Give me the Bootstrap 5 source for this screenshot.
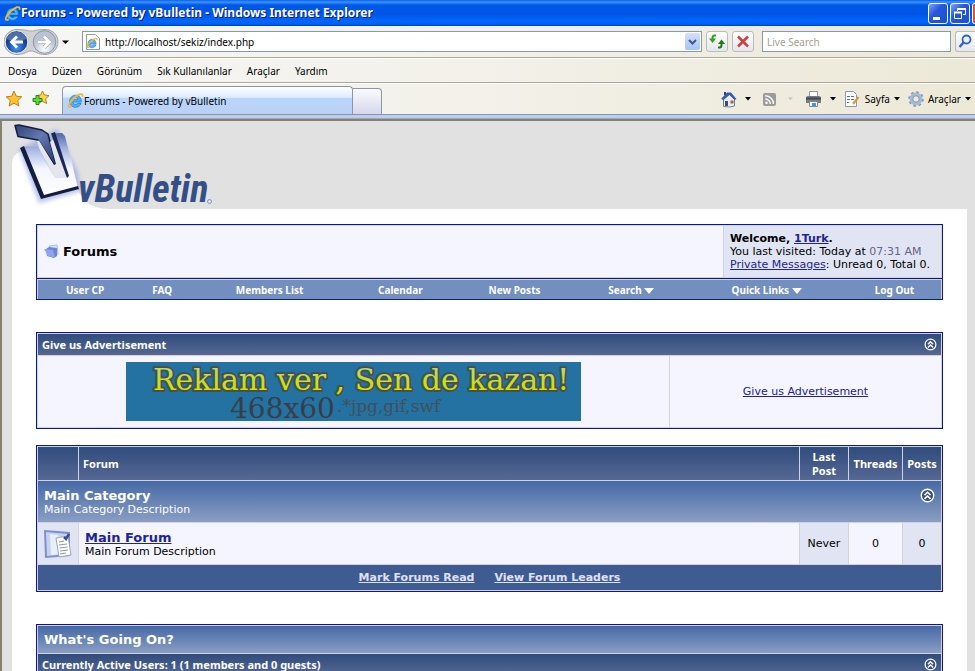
<!DOCTYPE html>
<html lang="tr">
<head>
<meta charset="utf-8">
<meta name="viewport" content="width=device-width, initial-scale=1">
<title>Forums - Powered by vBulletin</title>
<link rel="stylesheet" href="https://cdn.jsdelivr.net/npm/bootstrap@5.3.0/dist/css/bootstrap.min.css">
<style>
body{height:100vh;overflow:hidden;font:11px/13px "DejaVu Sans",sans-serif;color:#000;background:#e1e1e2}
svg{display:block;flex:none}
a{color:#22229c}
.tahoma,.tahoma input,.tahoma button{font-family:"Noto Sans",sans-serif;font-size:10px;line-height:14px}
/* window frame */
.titlebar{height:26px;background:linear-gradient(#0a5ef0 0,#3b94ff 2px,#0058e6 5px,#0055e5 14px,#0068ff 21px,#0060f5 24px,#003dd0 26px);color:#fff;font:bold 12px/16px "Noto Sans",sans-serif;text-shadow:1px 1px 0 #0a1883}
.winbtns{gap:2px}
.winbtn{width:20px;height:21px;border:1px solid #fff;border-radius:3px;background:linear-gradient(135deg,#7fa5f5,#2458dd 40%,#1a4fd5);padding:0}
.chrome{background:linear-gradient(90deg,#f6f6f6,#f3f1ea 45%,#ece9d8)}
.addressbar{height:32px;border-bottom:1px solid #aca899}
.menubar{height:25px;border-top:1px solid #fff;border-bottom:1px solid #aca899;gap:15px}
.menubar a{color:#000;text-decoration:none}
.tabbar{height:32px;border-top:1px solid #fff;border-bottom:1px solid #8c96a5}
.tabband{height:4px;background:#bccdf3;border-bottom:1px solid #9aa8c4}
.field{height:21px;border:1px solid #7f9db9;background:#fff}
.field input{border:0;outline:0;background:transparent;min-width:0;padding:0}
.addressfield{padding:0 1px 0 2px}
.searchfield{width:189px}
.searchfield input::placeholder{color:#a5a290;opacity:1}
.squarebtn{width:22px;height:21px;border:1px solid #b9bcc4;border-radius:3px;background:linear-gradient(#fdfdfd,#e6e7ec);padding:0}
.searchbtn{width:20px;border-right:0;border-radius:3px 0 0 3px}
.dropbtn{width:15px;height:17px;border:0;border-radius:2px;padding:0;background:linear-gradient(#d5e0fc,#a9c3f5)}
.tabs{margin-left:10px}
.tab{width:291px;height:28px;border:1px solid #8c96a5;border-bottom:0;border-radius:4px 4px 0 0;background:linear-gradient(#fff,#dcebfd 38%,#b9d5fb 42%,#bcd0f5)}
.newtab{width:29px;height:26px;border:1px solid #8c96a5;border-left:0;border-bottom:0;border-radius:0 4px 0 0;background:linear-gradient(#fafaff,#d5d8ec)}
.tools{gap:12px}
.toolbtn{border:0;background:transparent;padding:0;color:#000}
.feedbtn{gap:12px}
/* page */
.viewport{border-left:2px solid #85816f;border-top:2px solid #85816f;background:#e1e1e2}
.logo{height:88px;padding-left:10px}
.sheet{background:#fff;margin:0 8px 0 10px;padding:15px 24px 0}
.tborder{width:100%;border:1px solid #0b198c;background:#d1d1e1;border-collapse:separate;border-spacing:1px;color:#000}
.alt1{background:#f5f5ff}
.alt2{background:#e1e4f2}
.padcell{padding:0 6px}
.welcome{width:217px;padding:6px}
.time{color:#666686}
.crumb{font-size:13px;line-height:15px;font-weight:bold}
.navrow{border:1px solid #0b198c;border-top:0;background:#738fbf;box-shadow:inset 0 1px #d1d1e1,inset 1px 0 #d1d1e1,inset -1px 0 #d1d1e1;height:21px;padding-top:2px}
.navrow a{flex-basis:0;color:#fff;text-decoration:none;font:bold 10px/14px "Noto Sans",sans-serif}
.w1{flex-grow:96}.w2{flex-grow:58}.w3{flex-grow:156}.w4{flex-grow:105}.w5{flex-grow:123}.w6{flex-grow:110}.w7{flex-grow:160}.w8{flex-grow:95}
.thead-bar{background:linear-gradient(#2f4b7d,#566893);color:#fff;font:bold 11px/14px "Noto Sans",sans-serif}
.tcat-bar{background:linear-gradient(#4669a6,#8a9ec3);color:#fff}
.tcat-bar strong{font-size:13px;line-height:15px}
.tfoot-bar{background:#3e5c92}
.tfoot-bar a{color:#e0e0f6;font-weight:bold}
.footlinks{gap:20px}
.barrow{height:21px}
.headrow{height:33px}
.adrow{height:71px}
.forumrow{height:41px}
.footrow{height:25px}
.statusrow{height:27px}
.adcell{width:271px}
.iconcell{width:40px}
.c48{width:48px}.c53{width:53px}.c38{width:38px}
.gap1{margin-top:32px}.gap2{margin-top:16px}
.foldbtn{border:0;padding:0;background:transparent}
</style>
<script src="https://cdn.jsdelivr.net/npm/bootstrap@5.3.0/dist/js/bootstrap.bundle.min.js"></script>
</head>
<body>
<svg width="0" height="0" class="position-absolute" aria-hidden="true">
<defs>
<linearGradient id="lime" x1="0" y1="0" x2="0" y2="1"><stop offset=".2" stop-color="#b5dc6c"/><stop offset=".75" stop-color="#d3e000"/></linearGradient>
<linearGradient id="steel" x1="0" y1="0" x2="1" y2="1"><stop offset="0" stop-color="#2f4174"/><stop offset=".45" stop-color="#6478b2"/><stop offset="1" stop-color="#253564"/></linearGradient>
<linearGradient id="silver" x1="0" y1="0" x2="0" y2="1"><stop offset="0" stop-color="#4d64a8"/><stop offset=".25" stop-color="#a5b6e2"/><stop offset=".55" stop-color="#f4f6ff"/><stop offset="1" stop-color="#fff"/></linearGradient>
<radialGradient id="orb" cx=".5" cy=".75"><stop offset="0" stop-color="#4f9bea"/><stop offset=".6" stop-color="#2159b8"/><stop offset="1" stop-color="#163f8c"/></radialGradient>
<radialGradient id="orb2" cx=".5" cy=".8"><stop offset="0" stop-color="#fff"/><stop offset="1" stop-color="#b8c2d2"/></radialGradient>
<filter id="soft" x="-20%" y="-20%" width="140%" height="140%"><feGaussianBlur stdDeviation="2"/></filter>
<symbol id="ie" viewBox="0 0 16 16"><path d="M13.500 9.500H5.500c.3 1.500 1.300 2.200 2.600 2.200 1 0 1.700-.4 2.200-1h3c-.8 2.200-2.700 3.700-5.200 3.700-3.300 0-5.600-2.400-5.600-5.700 0-3.300 2.400-5.700 5.600-5.700 3.400 0 5.600 2.500 5.400 6.500zM5.600 7.200h4.800C10.200 6 9.300 5.300 8 5.300S5.900 6 5.600 7.200z" fill="#4db2fa" stroke="#1b6cc4" stroke-width=".6"/><path d="M14.400 4.500c.7-2-.2-3-2.100-2.400C8.800 3.200 3.500 8 1.900 11.600c-1 2.300.2 3.100 2.500 1.900" fill="none" stroke="#f6b829" stroke-width="1.700"/></symbol>
<symbol id="fold" viewBox="0 0 14 14"><circle cx="7" cy="7" r="5.800" fill="#35507f" stroke="#fff" stroke-width="1.300"/><path d="M4.200 6.700 7 4l2.800 2.700M4.200 10.200 7 7.500l2.800 2.700" fill="none" stroke="#fff" stroke-width="1.500"/></symbol>
<symbol id="down" viewBox="0 0 6 4"><path d="M0 0h6L3 3.500z"/></symbol>
</defs>
</svg>

<div class="d-flex flex-column h-100">
<header class="flex-shrink-0">
<div class="titlebar d-flex align-items-center ps-1">
<svg width="17" height="17"><use href="#ie"/></svg><span class="flex-grow-1 text-nowrap">Forums - Powered by vBulletin - Windows Internet Explorer</span>
<div class="winbtns d-flex flex-shrink-0">
<button class="winbtn" aria-label="Minimize"><svg width="18" height="19"><path d="M4 13h7v3H4z" fill="#fff"/></svg></button>
<button class="winbtn" aria-label="Restore"><svg width="18" height="19"><path d="M6.500 7V4.500h8v6H12M3.500 8.500h7v6h-7z" fill="none" stroke="#fff"/><path d="M6 4h9v2H6zM3 7.500h8v2H3z" fill="#fff"/></svg></button>
<svg width="3" height="21"><rect x=".5" y=".5" width="8" height="20" rx="2" fill="#e1542b" stroke="#fff"/></svg>
</div>
</div>

<div class="chrome tahoma">
<div class="addressbar d-flex align-items-center ps-1">
<svg class="me-2" width="66" height="28" viewBox="0 0 66 28"><path d="M13 1.500C22 1.500 23 3 27 3s6-1.500 14-1.500c8 0 13 5.500 13 12.500s-6 12.500-13 12.500S31 23 27 23s-6 3.500-14 3.500C6 26.500 0 21 0 14S6 1.500 13 1.500z" fill="#cfd1d5" stroke="#a3a6ab"/><circle cx="12.500" cy="14" r="11.300" fill="url(#orb)" stroke="#e7edf5"/><path d="M2.500 11a10.500 10.500 0 0 1 20 0q-10 4-20 0z" fill="#fff" opacity=".25"/><path d="M13 8.500 7.500 14l5.500 5.500M8 14h11" fill="none" stroke="#fff" stroke-width="2.800"/><circle cx="40.500" cy="14" r="11.300" fill="url(#orb2)" stroke="#8f97a3"/><path d="M40 8.500l5.500 5.500-5.500 5.500M45 14H34" fill="none" stroke="#a3acb9" stroke-width="4"/><path d="M40 8.500l5.500 5.500-5.500 5.500M45 14H34" fill="none" stroke="#fff" stroke-width="2.600"/><path d="M58 12.500h7L61.500 16z"/></svg>
<div class="field addressfield d-flex align-items-center flex-grow-1 ms-1"><svg width="16" height="16"><path d="M1.500.5h9l4 4v11h-13z" fill="#fff" stroke="#9a9a9a"/><use href="#ie" x="1" y="3" width="12" height="12"/></svg><input class="flex-grow-1 ms-1" aria-label="Address" value="http://localhost/sekiz/index.php">
<button class="dropbtn d-flex align-items-center justify-content-center" aria-label="Show addresses"><svg width="9" height="6"><path d="M1 1l3.500 3.500L8 1" fill="none" stroke="#3f5a8c" stroke-width="2"/></svg></button></div>
<button class="squarebtn ms-1" aria-label="Refresh"><svg width="20" height="19"><path d="M9 3.500H7.500q-2 0-2 2.500V8" fill="none" stroke="#34a021" stroke-width="2"/><path d="M2 6.500h7L5.500 11z" fill="#34a021"/><path d="M11 15.500h1.500q2 0 2-2.500v-2" fill="none" stroke="#1f7a14" stroke-width="2"/><path d="M11 12h7l-3.500-4.500z" fill="#1f7a14"/></svg></button>
<button class="squarebtn ms-1 me-2" aria-label="Stop"><svg width="20" height="19"><path d="M5 4.500l10 10M15 4.500l-10 10" stroke="#cf3f3f" stroke-width="2.500"/></svg></button>
<div class="field searchfield d-flex align-items-center"><input class="w-100 ps-1" placeholder="Live Search" aria-label="Live Search"></div>
<button class="squarebtn searchbtn ms-1" aria-label="Search"><svg width="19" height="19"><circle cx="10.500" cy="7.500" r="4" fill="#e8f1ff" stroke="#2d62cf" stroke-width="1.800"/><path d="M7.500 10.500 3.500 15" stroke="#2d62cf" stroke-width="2.500"/></svg></button>
</div>

<nav class="menubar d-flex align-items-center ps-2" aria-label="Menu">
<a href="#">Dosya</a><a href="#">Düzen</a><a href="#">Görünüm</a><a href="#">Sık Kullanılanlar</a><a href="#">Araçlar</a><a href="#">Yardım</a>
</nav>

<div class="tabbar d-flex align-items-center">
<button class="toolbtn ms-1" aria-label="Favorites"><svg width="20" height="18"><path d="M10 1l2.300 5.200 5.500.6-4.100 3.700 1.200 5.500L10 13.200 5.100 16l1.200-5.500L2.200 6.800l5.500-.6z" fill="#ffc531" stroke="#b8801f"/></svg></button>
<button class="toolbtn ms-2" aria-label="Add favorite"><svg width="20" height="18"><path d="M10.500 1l1.900 4 4.600.6-3.400 3.200 1 4.700-4.100-2.300L7 13l.5-4.200-3-3.200L8.700 5z" fill="#ffd24a" stroke="#b8801f"/><path d="M4 5.500h3v3h3v3H7v3H4v-3H1v-3h3z" fill="#6cd43f" stroke="#1c8a1c"/></svg></button>
<div class="tabs d-flex align-items-end align-self-end">
<div class="tab d-flex align-items-center ps-1"><svg width="17" height="17"><use href="#ie"/></svg><span class="text-nowrap">Forums - Powered by vBulletin</span></div>
<div class="newtab"></div>
</div>
<div class="tools d-flex align-items-center ms-auto flex-shrink-0">
<button class="toolbtn d-flex align-items-center gap-2" aria-label="Home"><svg width="16" height="17"><path d="M2.500 8v7.500l6 .5 5-1V8L8 3z" fill="#e9eef6" stroke="#6d7f9e"/><path d="M0 8 6 1.500h4L15.500 8l-2 1L8.500 4l-6 5z" fill="#3c58a8"/><path d="M3 1h2v3H3z" fill="#2b3f8e"/><path d="M4 10h3v5H4z" fill="#36507f"/><path d="M9.500 9.500h3v3h-3z" fill="#9a6a3c"/></svg><svg width="6" height="4"><use href="#down"/></svg></button>
<button class="toolbtn feedbtn d-flex align-items-center" aria-label="Feeds"><svg width="13" height="13"><rect width="13" height="13" rx="2" fill="#9b9b98"/><circle cx="3.500" cy="9.700" r="1.300" fill="#fff"/><path d="M2.300 6a5 5 0 0 1 5 5M2.300 2.800a8 8 0 0 1 8.200 8.200" fill="none" stroke="#fff" stroke-width="1.400"/></svg><svg width="5" height="4" fill="#c5c2b8" viewBox="0 0 6 4"><use href="#down"/></svg></button>
<div class="d-flex gap-2">
<button class="toolbtn d-flex align-items-center gap-2" aria-label="Print"><svg width="17" height="16"><path d="M4.500.5h8v6h-8z" fill="#fff" stroke="#999"/><path d="M1 6.500Q1 5 3 5h11q2 0 2 1.500V12H1z" fill="#777b84"/><path d="M1 6.500h15v2H1z" fill="#454850"/><path d="M4.500 10.500h8v5h-8z" fill="#fff" stroke="#888"/><path d="M7 12h4v3H7z" fill="#3f9ad8"/></svg><svg width="6" height="4"><use href="#down"/></svg></button>
<button class="toolbtn d-flex align-items-center"><svg width="17" height="16"><path d="M1.500.5h8l3 3v12h-11z" fill="#fff" stroke="#8c98ad"/><path d="M3 5.500h3M7 5.500h3M3 8.500h3M3 11.500h2M7 8.500h3" stroke="#4a6fb5"/><path d="M14.500 6 9 13" stroke="#d99a38" stroke-width="2.200"/></svg><span class="mx-1">Sayfa</span><svg width="6" height="4"><use href="#down"/></svg></button>
<button class="toolbtn d-flex align-items-center me-1"><svg width="16" height="16"><circle cx="8" cy="8" r="4.800" fill="none" stroke="#a5bbd4" stroke-width="3.400"/><circle cx="8" cy="8" r="7" fill="none" stroke="#7d9bbd" stroke-width="1.600" stroke-dasharray="2.700 2.800"/><circle cx="8" cy="8" r="3.200" fill="none" stroke="#6f8fb5" stroke-width=".8"/></svg><span class="mx-1">Araçlar</span><svg width="6" height="4"><use href="#down"/></svg></button>
</div>
</div>
</div>
<div class="tabband"></div>
</div>
</header>

<main class="viewport flex-grow-1 overflow-hidden">
<div class="logo">
<svg width="210" height="88" viewBox="12 121 210 88"><path d="M12 209v-44q0-12 10-14h38q12 0 14 20 2 38 36 38z" fill="#fff"/>
<path d="M19 150l20 53 42-12-4-20-20-42z" fill="#6f8ad6" opacity=".5" filter="url(#soft)"/>
<path d="M15 125.500l4-.5 23 5 6 4 8 30-2 .5-16-24.500-20-3.500z" fill="url(#steel)" stroke="#131d3f" stroke-width="1.500" stroke-linejoin="round"/>
<path d="M37 141l2-.5 15 24.500 2-1-6-22 5-4 13 39-13 1-16-30z" fill="#e4e6ee"/>
<path d="M22 147.500l3-1 12 .5 18 31 13-1-15-43.500 9-.5 3 3 13 52-37 9z" fill="url(#silver)"/>
<path d="M20 148l4-2 20 49 34-9 1 3-38 10z" fill="#131d3f"/>
<path d="M51 133.500l4-1.500 14 44-2 2z" fill="#1a2855"/>
<g font-family="'Liberation Sans Narrow','Roboto Condensed','Noto Sans',sans-serif" font-size="38" font-weight="bold" font-style="italic"><text x="78" y="202" fill="#344f85">vBulletin</text></g>
<circle cx="209.500" cy="201.500" r="2" fill="none" stroke="#6f86b4" stroke-width=".8"/></svg>
</div>

<div class="sheet">
<table class="tborder">
<tr><td class="alt1 padcell"><div class="crumb d-flex align-items-center gap-1"><svg width="15" height="15"><path d="M5 2l8-1 1 9-3 3z" fill="#d3e6f8" stroke="#9ab5dd" stroke-width=".8"/><path d="M2 5l3-2 8 1v8l-3 2-7-2z" fill="#6c86d8"/><path d="M0 5l9 1 2 8-7-2z" fill="#8fa6ee"/></svg><span>Forums</span></div></td>
<td class="alt2 text-nowrap welcome"><strong>Welcome, <a href="#">1Turk</a>.</strong><br>You last visited: Today at <span class="time">07:31 AM</span><br><a href="#">Private Messages</a>: Unread 0, Total 0.</td></tr>
</table>
<nav class="navrow d-flex align-items-center text-center text-nowrap" aria-label="Forum">
<a class="w1" href="#">User CP</a><a class="w2" href="#">FAQ</a><a class="w3" href="#">Members List</a><a class="w4" href="#">Calendar</a><a class="w5" href="#">New Posts</a><a class="w6" href="#">Search <svg class="d-inline" width="10" height="6"><path d="M0 0h10L5 6z" fill="#fff"/></svg></a><a class="w7" href="#">Quick Links <svg class="d-inline" width="10" height="6"><path d="M0 0h10L5 6z" fill="#fff"/></svg></a><a class="w8" href="#">Log Out</a>
</nav>

<table class="tborder gap1">
<tr class="barrow"><td class="thead-bar px-1 py-0" colspan="2"><div class="d-flex align-items-center justify-content-between"><span>Give us Advertisement</span><button class="foldbtn" aria-label="Collapse"><svg width="13" height="13"><use href="#fold"/></svg></button></div></td></tr>
<tr class="adrow"><td class="alt1 p-0"><svg class="mx-auto" width="455" height="59" role="img"><rect width="455" height="59" fill="#2372a1"/><g font-family="'DejaVu Serif',serif"><text x="27" y="28" font-size="30" fill="url(#lime)" stroke="#47504f" stroke-width="4" stroke-linejoin="round" paint-order="stroke">Reklam ver , Sen de kazan!</text><text x="104" y="56" font-size="28" fill="#383e48">468x60</text><text x="211" y="50" font-size="17" fill="#454e58">.*jpg,gif,swf</text></g></svg></td>
<td class="alt1 p-0 text-center adcell"><a href="#">Give us Advertisement</a></td></tr>
</table>

<table class="tborder gap2">
<thead><tr class="headrow"><th class="thead-bar iconcell p-0"></th><th class="thead-bar ps-1 py-0">Forum</th><th class="thead-bar c48 p-0 text-center">Last<br>Post</th><th class="thead-bar c53 p-0 text-center">Threads</th><th class="thead-bar c38 p-0 text-center">Posts</th></tr></thead>
<tbody>
<tr class="forumrow"><td colspan="5" class="tcat-bar padcell"><div class="d-flex justify-content-between"><div><strong class="d-block">Main Category</strong>Main Category Description</div><button class="foldbtn align-self-start" aria-label="Collapse"><svg width="15" height="15"><use href="#fold"/></svg></button></div></td></tr>
<tr class="forumrow"><td class="alt2 p-0"><svg class="mx-auto" width="28" height="30"><path d="M0 1l26 2v24L1 29z" fill="#7d8fd0"/><path d="M2 3l22 2v20L3 27z" fill="#c7d3ee"/><path d="M6 5l8 1 3 4v15L7 26z" fill="#e8eefa"/><path d="M12 9l12-2 3 19-12 2z" fill="#fff" stroke="#98a4c0"/><path d="M15 13l5-1M15 16l8-1M15.500 19l8-1M16 22l8-1M16 25l6-1" stroke="#8b93a8"/><path d="M20 8l2 2 3-5" fill="none" stroke="#3450a0" stroke-width="2.500"/></svg></td>
<td class="alt1 padcell"><strong class="crumb"><a href="#">Main Forum</a></strong><br>Main Forum Description</td><td class="alt2 p-0 text-center">Never</td><td class="alt1 p-0 text-center">0</td><td class="alt2 p-0 text-center">0</td></tr>
<tr class="footrow"><td colspan="5" class="tfoot-bar p-0"><div class="footlinks d-flex justify-content-center"><a href="#">Mark Forums Read</a><a href="#">View Forum Leaders</a></div></td></tr>
</tbody>
</table>

<table class="tborder gap1">
<tr class="statusrow"><td class="tcat-bar padcell"><strong>What's Going On?</strong></td></tr>
<tr class="barrow"><td class="thead-bar px-1 py-0"><div class="d-flex align-items-center justify-content-between"><span><a class="text-white text-decoration-none" href="#">Currently Active Users</a>: 1 (1 members and 0 guests)</span><button class="foldbtn" aria-label="Collapse"><svg width="13" height="13"><use href="#fold"/></svg></button></div></td></tr>
</table>
</div>
</main>
</div>
</body>
</html>
